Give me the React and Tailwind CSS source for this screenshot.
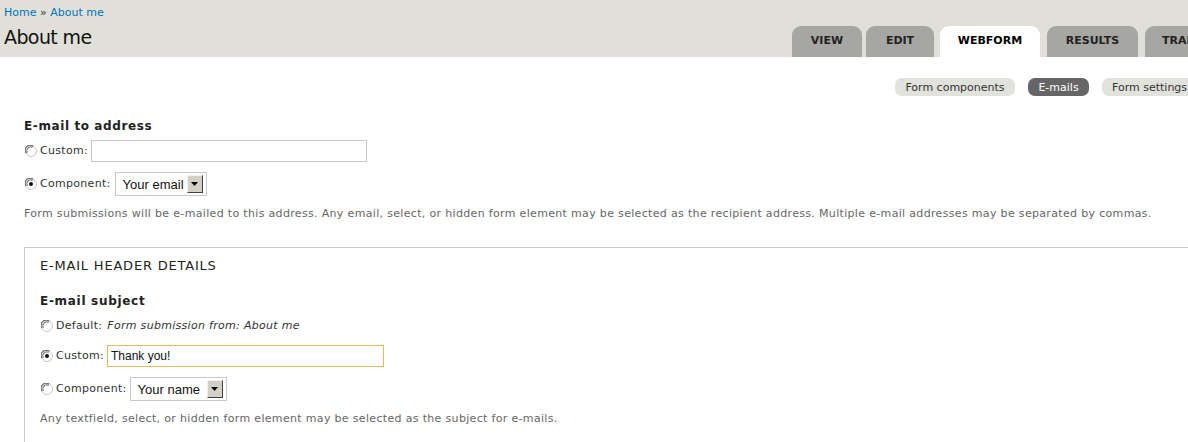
import React from "react";

const F = { fontFamily: '"DejaVu Sans", Verdana, sans-serif' };

function Radio({ checked }) {
  return (
    <svg width="12" height="12" viewBox="0 0 12 12" className="shrink-0">
      <circle cx="6" cy="6" r="5.5" fill="#fff" stroke="#c8c8c8" />
      <path d="M1.2 8.2 A5 5 0 0 1 8.2 1.2" fill="none" stroke="#707070" strokeWidth="1.2" />
      <path d="M2.4 7.6 A3.8 3.8 0 0 1 7.6 2.4" fill="none" stroke="#404040" strokeWidth="0.8" />
      {checked && <circle cx="6" cy="6" r="2" fill="#111" />}
    </svg>
  );
}

function Select({ value, width }) {
  return (
    <div
      className="h-[24px] border border-[#c8c8c8] bg-white flex items-center justify-between pl-[7px] pr-[3px] tracking-normal"
      style={{ width }}
    >
      <span className="text-[13px] text-[#111] leading-none" style={{ fontFamily: '"Liberation Sans", Arial, sans-serif' }}>
        {value}
      </span>
      <div className="w-[16px] h-[18px] bg-[#d4d0c8] border border-t-[#f0f0f0] border-l-[#f0f0f0] border-r-[#404040] border-b-[#404040] flex items-center justify-center">
        <svg width="7" height="4" viewBox="0 0 7 4">
          <path d="M0 0 H7 L3.5 4 Z" fill="#000" />
        </svg>
      </div>
    </div>
  );
}

function Tab({ label, width, active, left }) {
  return (
    <div
      className={`h-[31px] shrink-0 rounded-t-[9px] flex items-center text-[11px] font-bold ${
        left ? "justify-start pl-[17px]" : "justify-center"
      } ${active ? "bg-white text-black" : "bg-[#a6a7a2] text-[#222]"}`}
      style={{ width }}
    >
      {label}
    </div>
  );
}

export default function App() {
  return (
    <div className="w-[1188px] h-[442px] overflow-hidden bg-white text-[#333]" style={F}>
      {/* Header */}
      <div className="h-[57px] bg-[#e0e0d8] flex">
        <div className="w-[792px] shrink-0 pl-[4px]">
          <div className="pt-[6px] h-[22px] text-[11px] leading-[14px] text-[#0074bd]">
            Home <span className="text-[#333]">»</span> About me
          </div>
          <div className="mt-[1px] text-[19px] leading-[28px] text-[#111] tracking-[-0.6px]">About me</div>
        </div>
        <div className="flex items-end whitespace-nowrap">
          <Tab label="VIEW" width={70} />
          <div className="w-[4px] shrink-0" />
          <Tab label="EDIT" width={68} />
          <div className="w-[6px] shrink-0" />
          <Tab label="WEBFORM" width={100} active />
          <div className="w-[7px] shrink-0" />
          <Tab label="RESULTS" width={91} />
          <div className="w-[7px] shrink-0" />
          <Tab label="TRANSLATE" width={110} left />
        </div>
      </div>

      {/* Secondary tabs */}
      <div className="mt-[21px] h-[18px] pl-[895px] flex gap-[13px] whitespace-nowrap text-[11px] leading-[18px]">
        <div className="h-[18px] w-[120px] shrink-0 rounded-[7px] bg-[#e1e2dc] text-[#333] flex items-center justify-center pt-[1px]">
          Form components
        </div>
        <div className="h-[18px] w-[61px] shrink-0 rounded-[7px] bg-[#666] text-white flex items-center justify-center pt-[1px]">
          E-mails
        </div>
        <div className="h-[18px] w-[100px] shrink-0 rounded-[7px] bg-[#e1e2dc] text-[#333] flex items-center pl-[10px] pt-[1px]">
          Form settings
        </div>
      </div>

      <div className="pl-[24px] tracking-[0.3px]">
        <div className="mt-[22px] text-[12px] leading-[16px] font-bold text-[#222] tracking-[0.6px]">E-mail to address</div>
        <div className="mt-[6px] h-[22px] flex items-center">
          <div className="ml-[1px]"><Radio /></div>
          <span className="ml-[3px] text-[11px] pt-[1px]">Custom:</span>
          <div className="ml-[3px] w-[276px] h-[22px] border border-[#c8c8c8] bg-white" />
        </div>
        <div className="mt-[10px] h-[24px] flex items-center">
          <div className="ml-[1px]"><Radio checked /></div>
          <span className="ml-[3px] text-[11px] pt-[1px]">Component:</span>
          <div className="ml-[4px]"><Select value="Your email" width={92} /></div>
        </div>
        <div className="mt-[11px] text-[11px] leading-[14px] text-[#666] whitespace-nowrap tracking-[0.33px]">
          Form submissions will be e-mailed to this address. Any email, select, or hidden form element may be selected as the recipient address. Multiple e-mail addresses may be separated by commas.
        </div>

        {/* Fieldset */}
        <div className="mt-[26px] w-[1200px] h-[200px] border border-[#ccc] pl-[15px]">
          <div className="pt-[10px] text-[13px] leading-[16px] text-[#222] uppercase tracking-[0.8px]">E-mail header details</div>
          <div className="mt-[19px] text-[12px] leading-[16px] font-bold text-[#222] tracking-[0.7px]">E-mail subject</div>
          <div className="mt-[9px] h-[16px] flex items-center">
            <div className="ml-[1px]"><Radio /></div>
            <span className="ml-[3px] text-[11px] pt-[1px]">Default:</span>
            <span className="ml-[5px] text-[11px] italic pt-[1px]">Form submission from: About me</span>
          </div>
          <div className="mt-[11px] h-[22px] flex items-center">
            <div className="ml-[1px]"><Radio checked /></div>
            <span className="ml-[3px] text-[11px] pt-[1px]">Custom:</span>
            <div
              className="ml-[3px] w-[277px] h-[22px] border border-[#e0b860] bg-white flex items-center pl-[3px] text-[12px] text-[#111] tracking-normal"
              style={{ fontFamily: '"Liberation Sans", Arial, sans-serif' }}
            >
              Thank you!
            </div>
          </div>
          <div className="mt-[10px] h-[24px] flex items-center">
            <div className="ml-[1px]"><Radio /></div>
            <span className="ml-[3px] text-[11px] pt-[1px]">Component:</span>
            <div className="ml-[3px]"><Select value="Your name" width={97} /></div>
          </div>
          <div className="mt-[11px] text-[11px] leading-[14px] text-[#666] whitespace-nowrap tracking-[0.33px]">
            Any textfield, select, or hidden form element may be selected as the subject for e-mails.
          </div>
        </div>
      </div>
    </div>
  );
}
